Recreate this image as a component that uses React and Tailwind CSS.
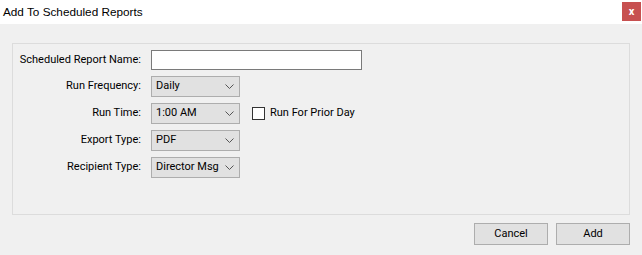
import { useState } from 'react';

function Chevron() {
  return (
    <svg width="9" height="5" viewBox="0 0 9 5" className="shrink-0">
      <polyline points="0.5,0.5 4.5,4.5 8.5,0.5" fill="none" stroke="#555" strokeWidth="1" />
    </svg>
  );
}

function Combo({ value }) {
  return (
    <div className="flex h-[21px] w-[89px] items-center justify-between border border-[#adadad] bg-[#e1e1e1] pl-[4px] pr-[5px]">
      <span className="whitespace-nowrap">{value}</span>
      <Chevron />
    </div>
  );
}

function Row({ label, children }) {
  return (
    <div className="flex items-center">
      <div className="w-[128px] whitespace-nowrap text-right">{label}</div>
      <div className="ml-[10px] flex items-center">{children}</div>
    </div>
  );
}

export default function App() {
  const [name, setName] = useState('');
  const [prior, setPrior] = useState(false);

  return (
    <div className="h-[255px] w-[642px] bg-[#f0f0f0] text-[11px] text-black" style={{ fontFamily: 'Roboto, "Liberation Sans", Arial, sans-serif' }}>
      <div className="flex h-[24px] items-start justify-between bg-white">
        <span className="ml-[3px] mt-[3px] text-[11.75px] leading-[18px]" style={{ fontFamily: '"Liberation Sans", Arial, sans-serif' }}>
          Add To Scheduled Reports
        </span>
        <button className="mr-[1px] mt-[2px] flex h-[19px] w-[19px] items-center justify-center bg-[#c75050] text-[11px] font-bold leading-none text-white">
          x
        </button>
      </div>

      <div className="ml-[12px] mt-[19px] flex h-[172px] w-[618px] flex-col gap-[6px] border border-[#dcdcdc] pt-[6px]">
        <Row label="Scheduled Report Name:">
          <input
            value={name}
            onChange={(e) => setName(e.target.value)}
            className="h-[20px] w-[211px] border border-[#7a7a7a] bg-white px-1 outline-none"
          />
        </Row>
        <Row label="Run Frequency:">
          <Combo value="Daily" />
        </Row>
        <Row label="Run Time:">
          <Combo value="1:00 AM" />
          <label className="ml-[12px] flex items-center gap-[5px]" onClick={() => setPrior(!prior)}>
            <span className="flex h-[13px] w-[13px] items-center justify-center border border-[#333] bg-white text-[10px] leading-none">
              {prior ? '✓' : ''}
            </span>
            <span>Run For Prior Day</span>
          </label>
        </Row>
        <Row label="Export Type:">
          <Combo value="PDF" />
        </Row>
        <Row label="Recipient Type:">
          <Combo value="Director Msg" />
        </Row>
      </div>

      <div className="mr-[12px] mt-[8px] flex justify-end gap-[8px]">
        <button className="h-[22px] w-[74px] border border-[#adadad] bg-[#e1e1e1]">Cancel</button>
        <button className="h-[22px] w-[74px] border border-[#adadad] bg-[#e1e1e1]">Add</button>
      </div>
    </div>
  );
}
